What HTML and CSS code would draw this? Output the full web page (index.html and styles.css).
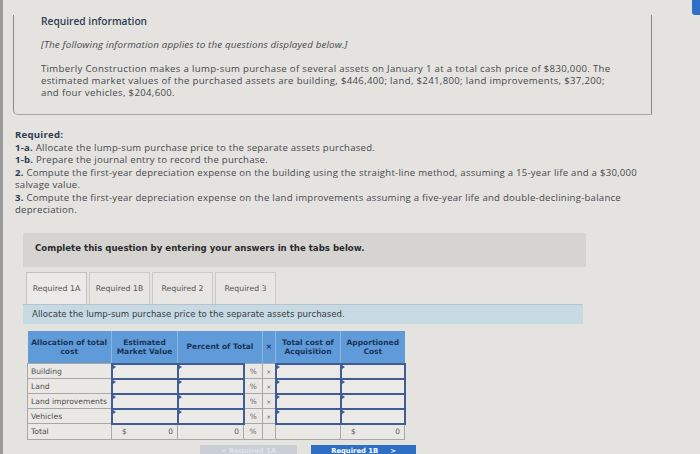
FILE: index.html
```html
<!DOCTYPE html>
<html>
<head>
<meta charset="utf-8">
<link rel="stylesheet" href="styles.css">
</head>
<body>
<div class="corner-btn"></div>
<div class="info">
  <div class="info-title">Required information</div>
  <div class="info-note">[The following information applies to the questions displayed below.]</div>
  <p class="info-text">Timberly Construction makes a lump-sum purchase of several assets on January 1 at a total cash price of $830,000. The<br>estimated market values of the purchased assets are building, $446,400; land, $241,800; land improvements, $37,200;<br>and four vehicles, $204,600.</p>
</div>

<div class="required">
  <div class="req-head">Required:</div>
  <div><b>1-a.</b> Allocate the lump-sum purchase price to the separate assets purchased.</div>
  <div><b>1-b.</b> Prepare the journal entry to record the purchase.</div>
  <div><b>2.</b> Compute the first-year depreciation expense on the building using the straight-line method, assuming a 15-year life and a $30,000<br>salvage value.</div>
  <div><b>3.</b> Compute the first-year depreciation expense on the land improvements assuming a five-year life and double-declining-balance<br>depreciation.</div>
</div>

<div class="complete">Complete this question by entering your answers in the tabs below.</div>

<div class="tabs">
  <div class="tab active">Required 1A</div>
  <div class="tab">Required 1B</div>
  <div class="tab">Required 2</div>
  <div class="tab">Required 3</div>
</div>
<div class="instr">Allocate the lump-sum purchase price to the separate assets purchased.</div>

<div class="table-wrap">
<table class="alloc">
  <colgroup>
    <col class="c1"><col class="c2"><col class="c3"><col class="c4"><col class="c5"><col class="c6"><col class="c7">
  </colgroup>
  <tr class="head">
    <th>Allocation of total cost</th>
    <th>Estimated Market Value</th>
    <th colspan="2">Percent of Total</th>
    <th>×</th>
    <th>Total cost of Acquisition</th>
    <th>Apportioned Cost</th>
  </tr>
  <tr>
    <td class="lbl">Building</td><td class="in"></td><td class="in"></td><td class="pct">%</td><td class="x">×</td><td class="in"></td><td class="in"></td>
  </tr>
  <tr>
    <td class="lbl">Land</td><td class="in"></td><td class="in"></td><td class="pct">%</td><td class="x">×</td><td class="in"></td><td class="in"></td>
  </tr>
  <tr>
    <td class="lbl">Land improvements</td><td class="in"></td><td class="in"></td><td class="pct">%</td><td class="x">×</td><td class="in"></td><td class="in"></td>
  </tr>
  <tr>
    <td class="lbl">Vehicles</td><td class="in"></td><td class="in"></td><td class="pct">%</td><td class="x">×</td><td class="in"></td><td class="in"></td>
  </tr>
  <tr class="total">
    <td class="lbl">Total</td>
    <td class="val"><span>$</span><span>0</span></td>
    <td class="val"><span></span><span>0</span></td>
    <td class="pct">%</td>
    <td></td>
    <td></td>
    <td class="val"><span>$</span><span>0</span></td>
  </tr>
</table>
</div>

<div class="nav">
  <div class="btn prev">&lt; Required 1A</div>
  <div class="btn next">Required 1B <span class="chev">&gt;</span></div>
</div>
</body>
</html>
```

FILE: styles.css
```css
html, body {
  margin: 0;
  padding: 0;
}
body {
  width: 700px;
  height: 454px;
  overflow: hidden;
  background: #e4e3e0;
  border-left: 3px solid #9a9a98;
  box-sizing: border-box;
  font-family: "Open Sans", "Lato", sans-serif;
  color: #46494e;
  position: relative;
}
.corner-btn {
  position: absolute;
  top: 0;
  left: 689px;
  width: 14px;
  height: 15px;
  background: #2f6fc8;
  border-radius: 0 0 0 3px;
}
.info {
  margin: 15px 0 0 10px;
  width: 639px;
  height: 100px;
  box-sizing: border-box;
  border-left: 1px solid #8a8a8a;
  border-right: 1px solid #8a8a8a;
  border-bottom: 1px solid #a5a5a3;
  border-bottom-left-radius: 5px;
  padding: 0 0 0 27px;
}
.info-title {
  font-weight: 600;
  font-size: 10.2px;
  color: #2f3d52;
  line-height: 13px;
}
.info-note {
  font-style: italic;
  font-size: 9.8px;
  letter-spacing: 0.15px;
  margin-top: 10px;
  line-height: 13px;
}
.info-text {
  margin: 12px 0 0 0;
  font-size: 9.6px;
  letter-spacing: 0.33px;
  line-height: 12px;
  white-space: nowrap;
}
.required {
  margin: 14px 0 0 12px;
  font-size: 9.6px;
  letter-spacing: 0.24px;
  line-height: 12.5px;
  white-space: nowrap;
}
.required b, .req-head {
  font-weight: 700;
  color: #2f3d52;
}
.complete {
  margin: 16px 0 0 20px;
  width: 563px;
  height: 34px;
  box-sizing: border-box;
  background: #d5d4d1;
  font-family: "DejaVu Sans", Verdana, sans-serif;
  font-weight: bold;
  font-size: 8.6px;
  color: #2b2b2b;
  padding: 10px 0 0 12px;
}
.tabs {
  display: flex;
  gap: 2px;
  margin: 5px 0 0 23px;
  height: 32px;
}
.tab {
  width: 61px;
  box-sizing: border-box;
  border: 1px solid #cbcac7;
  border-bottom: none;
  background: #e7e6e3;
  font-family: "DejaVu Sans", Verdana, sans-serif;
  font-size: 7.8px;
  color: #555;
  display: flex;
  align-items: center;
  justify-content: center;
  white-space: nowrap;
}
.tab.active {
  background: #ebeae8;
  border-color: #c2c1be;
}
.instr {
  margin: 0 0 0 20px;
  width: 560px;
  height: 20px;
  box-sizing: border-box;
  background: #c7d9e2;
  border-top: 1px solid #b8c2c8;
  font-family: "DejaVu Sans", Verdana, sans-serif;
  font-size: 8.6px;
  color: #3a3d40;
  padding: 4px 0 0 9px;
  white-space: nowrap;
}
.table-wrap {
  margin: 7px 0 0 24px;
}
.alloc {
  border-collapse: collapse;
  table-layout: fixed;
  width: 377px;
  font-family: "DejaVu Sans", Verdana, sans-serif;
  font-size: 7.4px;
}
.c1 { width: 84px; }
.c2 { width: 66px; }
.c3 { width: 66px; }
.c4 { width: 19px; }
.c5 { width: 13px; }
.c6 { width: 65px; }
.c7 { width: 64px; }
.alloc th {
  background: #5f9ad9;
  color: #1b3358;
  font-weight: bold;
  height: 32px;
  padding: 0 2px;
  line-height: 9px;
  border-left: 1px solid #8fb6e0;
  font-size: 7.5px;
}
.alloc th:first-child { border-left: none; }
.alloc td {
  height: 13px;
  border: 1px solid #a8a8a6;
  background: #e9e8e5;
  padding: 0;
  color: #555;
}
.alloc td.lbl {
  padding-left: 3px;
  white-space: nowrap;
  font-size: 7.6px;
  color: #4d4d4d;
}
.alloc td.in {
  border: 2px solid #3f5c94;
  background: #ebeae7;
  position: relative;
}
.alloc td.in::before {
  content: "";
  position: absolute;
  left: 0;
  top: 0;
  border-left: 3px solid #3f5c94;
  border-bottom: 2px solid transparent;
  border-top: 2px solid transparent;
}
.alloc td.pct {
  text-align: center;
  color: #666;
}
.alloc td.x {
  text-align: center;
  font-size: 6px;
  color: #666;
}
.alloc tr.total td {
  height: 14px;
}
.alloc td.val span {
  display: inline-block;
}
.alloc td.val {
  padding: 0 4px 0 10px;
  text-align: right;
}
.alloc td.val span:first-child {
  float: left;
}
.nav {
  display: flex;
  gap: 14px;
  margin: 5px 0 0 197px;
}
.btn {
  width: 97px;
  height: 12px;
  font-family: "DejaVu Sans", Verdana, sans-serif;
  font-size: 6.8px;
  line-height: 9px;
  font-weight: bold;
  display: flex;
  justify-content: center;
  padding-top: 2px;
  box-sizing: border-box;
  white-space: nowrap;
}
.prev {
  background: #c9cfd4;
  color: #dfe4e8;
}
.next {
  width: 105px;
  background: #2e6fc3;
  color: #ffffff;
}
.chev {
  margin-left: 12px;
}
```
